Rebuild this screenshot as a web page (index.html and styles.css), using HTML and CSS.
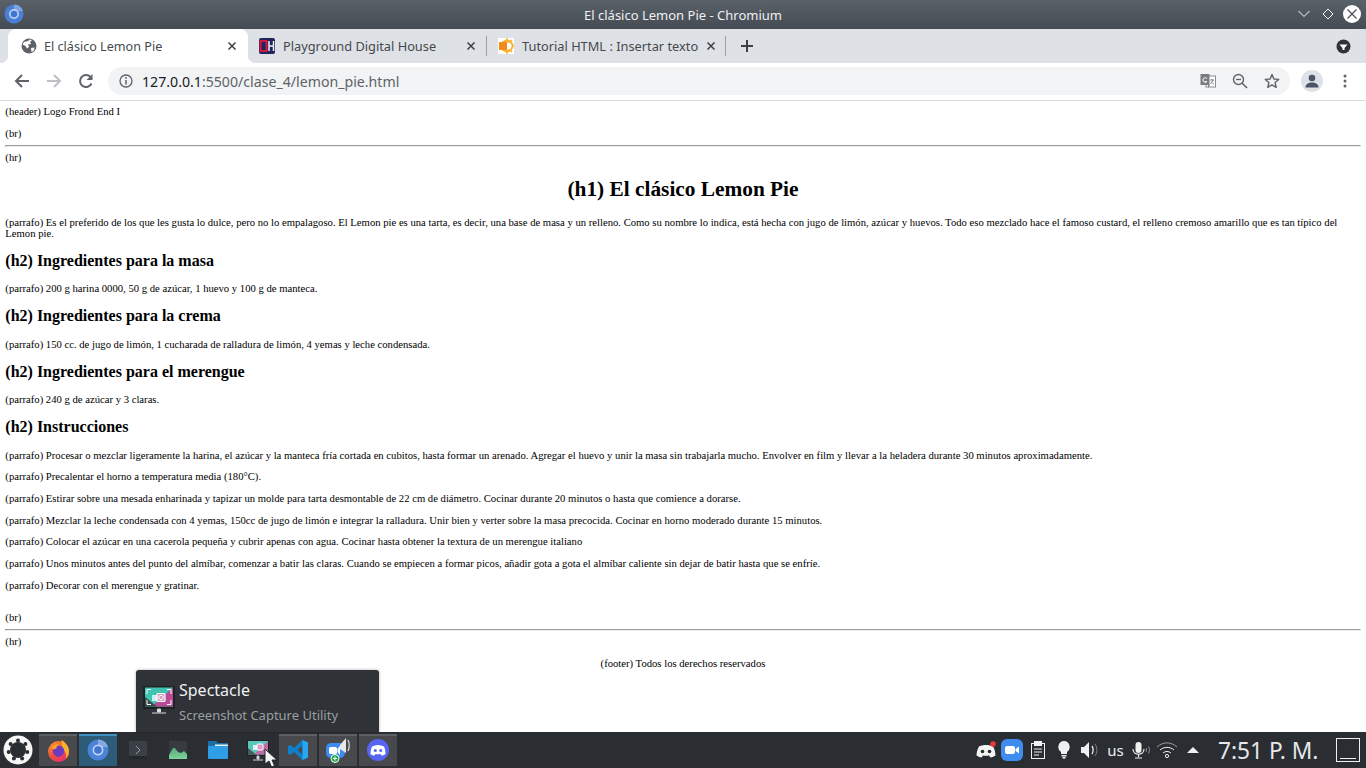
FILE: index.html
```html
<!DOCTYPE html>
<html lang="es">
<head>
<meta charset="utf-8">
<title>El clásico Lemon Pie - Chromium</title>
<link rel="stylesheet" href="styles.css">
</head>
<body>
<div class="titlebar">
  <svg class="app-icon" width="20" height="20" viewBox="0 0 20 20"><circle cx="10" cy="10" r="9.500" fill="#4a7fd6"/><path d="M10 .5A9.500 9.500 0 0 1 19 7H10Z" fill="#7ea4e4"/><circle cx="10" cy="10" r="5" fill="#b9d0f3"/><circle cx="10" cy="10" r="3.300" fill="#3f76cf"/></svg>
  <span class="title-text">El clásico Lemon Pie - Chromium</span>
  <div class="win-buttons">
    <svg class="win-chevron" width="14" height="10" viewBox="0 0 14 10"><path d="M1.500 2 7 7.500 12.500 2" fill="none" stroke="#fff" stroke-width="1"/></svg>
    <svg width="12" height="12" viewBox="0 0 12 12"><path d="M6 1 11 6 6 11 1 6Z" fill="none" stroke="#fff" stroke-width="1"/></svg>
    <svg width="18" height="18" viewBox="0 0 18 18"><circle cx="9" cy="9" r="9" fill="#fff"/><path d="M4.500 4.500 13.500 13.500M13.500 4.500 4.500 13.500" stroke="#4a4f56" stroke-width="1.200"/></svg>
  </div>
</div>

<div class="tabstrip">
  <div class="tab tab-active">
    <svg width="16" height="16" viewBox="0 0 16 16"><circle cx="8" cy="8" r="7.500" fill="#5f6368"/><path d="M3 4 7 3 9 1.500 11 2 9 4 10 6 7 6.500 8 9 6 10.500 4.500 8 1.500 6.500ZM10 10 13.500 9.500 13 12.500 10.500 14Z" fill="#fff"/></svg>
    <span class="tab-label">El clásico Lemon Pie</span>
    <svg class="tab-x" width="10" height="10" viewBox="0 0 10 10"><path d="M1.500 1.500 8.500 8.500M8.500 1.500 1.500 8.500" stroke="#3c4043" stroke-width="1.500"/></svg>
  </div>
  <div class="tab tab-second">
    <svg width="16" height="16" viewBox="0 0 16 16"><rect width="16" height="16" rx="2" fill="#23235e"/><rect x="1.500" y="3" width="6" height="10" fill="none" stroke="#e5173f" stroke-width="1.800"/><path d="M10 3v10M14.500 3v10M10 8h4.500" stroke="#f2f2f8" stroke-width="1.500" fill="none"/></svg>
    <span class="tab-label">Playground Digital House</span>
    <svg class="tab-x" width="10" height="10" viewBox="0 0 10 10"><path d="M1.500 1.500 8.500 8.500M8.500 1.500 1.500 8.500" stroke="#3c4043" stroke-width="1.500"/></svg>
  </div>
  <span class="tab-sep"></span>
  <div class="tab tab-third">
    <svg width="16" height="16" viewBox="0 0 16 16"><rect width="16" height="16" fill="#fff"/><circle cx="9" cy="8" r="6.500" fill="#f9b233"/><path d="M9 0v3M16 8h-3M14 2l-2 2M14 14l-2-2M9 16v-3" stroke="#f9b233" stroke-width="1.500"/><circle cx="10" cy="8" r="3.500" fill="#fff"/><rect x="1" y="4" width="8" height="8" rx="1" fill="#f08a1d"/></svg>
    <span class="tab-label">Tutorial HTML : Insertar texto</span>
    <svg class="tab-x" width="10" height="10" viewBox="0 0 10 10"><path d="M1.500 1.500 8.500 8.500M8.500 1.500 1.500 8.500" stroke="#3c4043" stroke-width="1.500"/></svg>
  </div>
  <span class="tab-sep"></span>
  <svg class="new-tab" width="14" height="14" viewBox="0 0 14 14"><path d="M7 1v12M1 7h12" stroke="#3c4043" stroke-width="2"/></svg>
  <svg class="tab-menu" width="15" height="15" viewBox="0 0 15 15"><circle cx="7.500" cy="7.500" r="7" fill="#303236"/><path d="M3.500 5.500h8L8.500 9v2h-2V9Z" fill="#fff"/></svg>
</div>

<div class="toolbar">
  <svg class="nav-icon" width="16" height="16" viewBox="0 0 16 16"><path d="M15 8H2M8 2 2 8l6 6" fill="none" stroke="#5f6368" stroke-width="2"/></svg>
  <svg class="nav-icon" width="16" height="16" viewBox="0 0 16 16"><path d="M1 8h13M8 2l6 6-6 6" fill="none" stroke="#bdc1c6" stroke-width="2"/></svg>
  <svg class="nav-icon" width="16" height="16" viewBox="0 0 16 16"><path d="M13.500 10.500A6 6 0 1 1 12.300 3.800" fill="none" stroke="#5f6368" stroke-width="2"/><path d="M14.500 1v6h-6Z" fill="#5f6368"/></svg>
  <div class="omnibox">
    <svg class="info" width="14" height="14" viewBox="0 0 14 14"><circle cx="7" cy="7" r="6" fill="none" stroke="#5f6368" stroke-width="1.300"/><path d="M7 6v4.500" stroke="#5f6368" stroke-width="1.500"/><circle cx="7" cy="4" r=".9" fill="#5f6368"/></svg>
    <span class="url"><span class="url-host">127.0.0.1</span>:5500/clase_4/lemon_pie.html</span>
    <div class="omni-actions">
      <svg width="16" height="16" viewBox="0 0 16 16"><rect x="6" y="3" width="9.500" height="11" fill="#fff" stroke="#8a8d91" stroke-width="1"/><rect x=".5" y="1" width="9" height="11" fill="#797c80"/><path d="M7 5.500A2.300 2.300 0 1 0 7 8.500H5" stroke="#fff" fill="none" stroke-width="1"/><path d="M8 15l2-3h-2Z" fill="#797c80"/><path d="M10 7h4M12 6v1M13 7c-.5 2-2 3-3 4M11 8.500c.5 1 2 2 3 2.500" stroke="#6b6e72" stroke-width=".8" fill="none"/></svg>
      <svg width="16" height="16" viewBox="0 0 16 16"><circle cx="6.500" cy="6.500" r="5" fill="none" stroke="#5f6368" stroke-width="1.400"/><path d="M10.200 10.200 15 15" stroke="#5f6368" stroke-width="1.600"/><path d="M4 6.500h5" stroke="#5f6368" stroke-width="1.300"/></svg>
      <svg width="16" height="16" viewBox="0 0 16 16"><path d="M8 1.500 9.900 6l4.800.4-3.600 3.200 1.100 4.700L8 11.800l-4.200 2.500 1.100-4.700L1.300 6.400 6.100 6Z" fill="none" stroke="#5f6368" stroke-width="1.400" stroke-linejoin="round"/></svg>
    </div>
  </div>
  <div class="avatar"><svg width="14" height="14" viewBox="0 0 14 14"><circle cx="7" cy="4" r="3.300" fill="#4a5568"/><path d="M.5 13.500c0-3.500 3-5 6.500-5s6.500 1.500 6.500 5Z" fill="#4a5568"/></svg></div>
  <svg class="kebab" width="4" height="14" viewBox="0 0 4 14"><circle cx="2" cy="2" r="1.500" fill="#5f6368"/><circle cx="2" cy="7" r="1.500" fill="#5f6368"/><circle cx="2" cy="12" r="1.500" fill="#5f6368"/></svg>
</div>

<main class="viewport">
  <div class="page">
    <div class="line-gap">(header) Logo Frond End I</div>
    <div>(br)</div>
    <hr>
    <div>(hr)</div>
    <h1>(h1) El clásico Lemon Pie</h1>
    <p>(parrafo) Es el preferido de los que les gusta lo dulce, pero no lo empalagoso. El Lemon pie es una tarta, es decir, una base de masa y un relleno. Como su nombre lo indica, está hecha con jugo de limón, azúcar y huevos. Todo eso mezclado hace el famoso custard, el relleno cremoso amarillo que es tan típico del Lemon pie.</p>
    <h2>(h2) Ingredientes para la masa</h2>
    <p>(parrafo) 200 g harina 0000, 50 g de azúcar, 1 huevo y 100 g de manteca.</p>
    <h2>(h2) Ingredientes para la crema</h2>
    <p>(parrafo) 150 cc. de jugo de limón, 1 cucharada de ralladura de limón, 4 yemas y leche condensada.</p>
    <h2>(h2) Ingredientes para el merengue</h2>
    <p>(parrafo) 240 g de azúcar y 3 claras.</p>
    <h2>(h2) Instrucciones</h2>
    <p>(parrafo) Procesar o mezclar ligeramente la harina, el azúcar y la manteca fría cortada en cubitos, hasta formar un arenado. Agregar el huevo y unir la masa sin trabajarla mucho. Envolver en film y llevar a la heladera durante 30 minutos aproximadamente.</p>
    <p>(parrafo) Precalentar el horno a temperatura media (180°C).</p>
    <p>(parrafo) Estirar sobre una mesada enharinada y tapizar un molde para tarta desmontable de 22 cm de diámetro. Cocinar durante 20 minutos o hasta que comience a dorarse.</p>
    <p>(parrafo) Mezclar la leche condensada con 4 yemas, 150cc de jugo de limón e integrar la ralladura. Unir bien y verter sobre la masa precocida. Cocinar en horno moderado durante 15 minutos.</p>
    <p>(parrafo) Colocar el azúcar en una cacerola pequeña y cubrir apenas con agua. Cocinar hasta obtener la textura de un merengue italiano</p>
    <p>(parrafo) Unos minutos antes del punto del almíbar, comenzar a batir las claras. Cuando se empiecen a formar picos, añadir gota a gota el almíbar caliente sin dejar de batir hasta que se enfríe.</p>
    <p class="last-para">(parrafo) Decorar con el merengue y gratinar.</p>
    <div>(br)</div>
    <hr class="footer-rule">
    <div class="line-gap">(hr)</div>
    <div class="footer-line">(footer) Todos los derechos reservados</div>
  </div>
</main>

<div class="tooltip">
  <svg width="32" height="30" viewBox="0 0 32 30"><rect x="0" y="0" width="32" height="23" rx="1" fill="#1f2224"/><rect x="2" y="1.500" width="28" height="19" fill="#3fc4b4"/><path d="M30 1.500v19H9Z" fill="#b84a96"/><path d="M2 20.500V11l12 9.500Z" fill="#3c4a4c"/><rect x="9" y="9" width="6" height="6" fill="#fff" opacity=".75"/><rect x="14" y="7.500" width="8" height="8" rx="1" fill="#d99ec4" stroke="#fff" stroke-width="1.200"/><circle cx="18" cy="11.500" r="2.200" fill="none" stroke="#fff"/><path d="M4 8V3.500h4M28 8V3.500h-4M4 14v4.500h4M28 14v4.500h-4" fill="none" stroke="#fff" stroke-width="1"/><path d="M14.500 23h3v3h-3ZM9 27h14" stroke="#d9dcde" stroke-width="1" fill="#d9dcde"/></svg>
  <div class="tooltip-text">
    <div class="tooltip-title">Spectacle</div>
    <div class="tooltip-sub">Screenshot Capture Utility</div>
  </div>
</div>

<footer class="taskbar">
  <svg class="start" width="30" height="30" viewBox="0 0 30 30"><circle cx="15" cy="15" r="14.500" fill="#f6f6f6"/><circle cx="15" cy="15" r="8" fill="#2a2e32"/><g fill="#2a2e32"><circle cx="15" cy="5.500" r="2"/><circle cx="22.400" cy="9" r="2"/><circle cx="24.300" cy="17" r="2"/><circle cx="19.100" cy="23.500" r="2"/><circle cx="10.900" cy="23.500" r="2"/><circle cx="5.700" cy="17" r="2"/><circle cx="7.600" cy="9" r="2"/></g></svg>
  <div class="task task-on">
    <svg width="23" height="23" viewBox="0 0 22 22"><defs><linearGradient id="ff" x1="0" y1="0" x2=".6" y2="1"><stop offset="0" stop-color="#ff9a2e"/><stop offset=".6" stop-color="#f2503a"/><stop offset="1" stop-color="#e8336e"/></linearGradient></defs><circle cx="11" cy="12" r="10" fill="url(#ff)"/><path d="M14 1c3 2 7 5 7 11 0 3-1 5-3 7 1-4 0-8-4-10Z" fill="#fbb02c"/><circle cx="11" cy="11.500" r="5.500" fill="#6d3bc0"/><path d="M4 8c2-3 7-4 9-2-3 0-4 1-4 3l-3 1Z" fill="#ff9f2e"/></svg>
  </div>
  <div class="task task-active">
    <svg width="22" height="22" viewBox="0 0 22 22"><circle cx="11" cy="11" r="10.500" fill="#4a83d8"/><path d="M11 .5A10.500 10.500 0 0 1 21 8H11Z" fill="#86a9e4"/><circle cx="11" cy="11" r="5.500" fill="#bcd2f2"/><circle cx="11" cy="11" r="3.800" fill="#3f76cf"/></svg>
  </div>
  <div class="task">
    <svg width="18" height="18" viewBox="0 0 18 18"><rect width="18" height="18" rx="1" fill="#3a4045"/><path d="M0 15h18v2a1 1 0 0 1-1 1H1a1 1 0 0 1-1-1Z" fill="#24282b"/><path d="M7 5l4 4-4 4" fill="none" stroke="#9aa1a6" stroke-width="1"/></svg>
  </div>
  <div class="task">
    <svg width="18" height="18" viewBox="0 0 18 18"><defs><linearGradient id="gr" x1="0" y1="0" x2="0" y2="1"><stop offset="0" stop-color="#5aa878"/><stop offset="1" stop-color="#7ed39c"/></linearGradient></defs><rect width="18" height="18" fill="#363b40"/><path d="M0 14 4 7l2 0 3 4 3 1 3-2 3 3v5H0Z" fill="url(#gr)"/></svg>
  </div>
  <div class="task">
    <svg width="20" height="18" viewBox="0 0 20 18"><path d="M0 1a1 1 0 0 1 1-1h7l2 2h9a1 1 0 0 1 1 1v4H0Z" fill="#1a6fa8"/><path d="M0 5h20v12a1 1 0 0 1-1 1H1a1 1 0 0 1-1-1Z" fill="#2e9fe6"/><path d="M7 3.500h13V5H7Z" fill="#e8f4fb"/></svg>
  </div>
  <div class="task">
    <svg width="22" height="21" viewBox="0 0 22 21"><rect width="22" height="16" rx="1" fill="#1f2224"/><rect x="1" y="1" width="20" height="13.500" fill="#58c8bc"/><path d="M21 1v13.500H7Z" fill="#c06aa8"/><path d="M1 14.500V8l8 6.500Z" fill="#4a5a5c"/><rect x="6" y="5" width="5" height="5" fill="#fff" opacity=".8"/><rect x="10" y="4" width="6" height="6" rx="1" fill="#d99ec4" stroke="#fff"/><path d="M10 16h2v3h-2ZM6 20h10" stroke="#cfd3d6" fill="#cfd3d6"/></svg>
  </div>
  <div class="task task-on">
    <svg width="22" height="22" viewBox="0 0 22 22"><path d="M15.500 1 21 3.500v15L15.500 21 7 13l-4 3-2-1.200v-7.600L3 6l4 3Zm0 5.500L10.500 11l5 4.500Z" fill="#0e7fcb"/><path d="M15.500 1 21 3.500v15L15.500 21Z" fill="#2aa5ef"/></svg>
  </div>
  <div class="task task-on">
    <svg width="26" height="26" viewBox="0 0 26 26"><rect x="1" y="6" width="19" height="15" rx="5" fill="#3f8cf0"/><rect x="4" y="10" width="8" height="7" rx="1.500" fill="#fff"/><path d="M12.500 12 15 9v9l-2.500-3Z" fill="#fff"/><path d="M15 8 21 1v15l-6-4Z" fill="#e8e8e8"/><path d="M23 3c1.500 3 1.500 8 0 11" stroke="#cfcfcf" fill="none" stroke-width="1.500"/><circle cx="10" cy="21.500" r="4" fill="#1fa84b" stroke="#fff" stroke-width="1"/><path d="M8 21.500h4M10 19.500v4" stroke="#fff" stroke-width="1"/></svg>
  </div>
  <div class="task task-on">
    <svg width="22" height="22" viewBox="0 0 22 22"><circle cx="11" cy="11" r="11" fill="#5865f2"/><path d="M5 7.500c2-1 4-1.500 6-1.500s4 .5 6 1.500c1 2 1.500 5 1.500 7.500-1.500 1-3 1.500-4 1.500l-1-1.500c-1.500.3-3.500.3-5 0l-1 1.500c-1 0-2.500-.5-4-1.500C3.500 12.500 4 9.500 5 7.500Z" fill="#fff"/><circle cx="8.300" cy="11.500" r="1.500" fill="#5865f2"/><circle cx="13.700" cy="11.500" r="1.500" fill="#5865f2"/></svg>
  </div>

  <div class="tray">
    <div class="slot slot-wide"><svg width="22" height="18" viewBox="0 0 22 18"><path d="M4 5.500c2-1 4.500-1.500 7-1.500s5 .5 7 1.500c1.500 2.500 2.500 6 2.500 9-2 1.200-3.500 2-5 2l-1.500-2c-2 .3-4 .3-6 0l-1.500 2c-1.500 0-3-.8-5-2C1.500 11.500 2.500 8 4 5.500Z" fill="#f4f4f4"/><circle cx="7.500" cy="10.500" r="1.800" fill="#2a2e32"/><circle cx="14.500" cy="10.500" r="1.800" fill="#2a2e32"/><circle cx="18" cy="3" r="2.800" fill="#e8383d"/></svg></div>
    <div class="slot"><svg width="22" height="22" viewBox="0 0 22 22"><rect width="22" height="22" rx="6" fill="#3f8cf0"/><rect x="4" y="7" width="10" height="8" rx="2" fill="#fff"/><path d="M14.500 10 18 7.500v7L14.500 12Z" fill="#fff"/></svg></div>
    <div class="slot"><svg width="14" height="18" viewBox="0 0 14 18"><rect x=".5" y="2.500" width="13" height="15" fill="none" stroke="#eff0f1"/><rect x="3" y="0" width="8" height="5" fill="#eff0f1"/><path d="M3 8h8M3 11h8M3 14h5" stroke="#eff0f1"/></svg></div>
    <div class="slot"><svg width="12" height="18" viewBox="0 0 12 18"><path d="M6 0a6 6 0 0 1 3 11v2H3v-2A6 6 0 0 1 6 0Z" fill="#eff0f1"/><rect x="3.500" y="14" width="5" height="1.500" fill="#eff0f1"/><rect x="4.500" y="16" width="3" height="1.500" fill="#eff0f1"/></svg></div>
    <div class="slot"><svg width="18" height="16" viewBox="0 0 18 16"><path d="M0 5h3l5-5v16l-5-5H0Z" fill="#eff0f1"/><path d="M11 4c1.500 2 1.500 6 0 8" stroke="#eff0f1" stroke-width="1.300" fill="none"/><path d="M14 2c2.500 3.500 2.500 8.500 0 12" stroke="#7f8386" stroke-width="1" fill="none"/></svg></div>
    <div class="slot slot-narrow"><span class="t-layout">us</span></div>
    <div class="slot"><svg width="19" height="17" viewBox="0 0 19 17"><rect x="3.500" y="0" width="6" height="11" rx="3" fill="#eff0f1"/><path d="M1 7c0 7 11 7 11 0M6.500 12v3M3 16h7" stroke="#eff0f1" fill="none" stroke-width="1.200"/><path d="M14 6c.7 1.200.7 3 0 4M16.500 4.500c1.300 2 1.300 5 0 7" stroke="#8a8e91" fill="none"/></svg></div>
    <div class="slot"><svg width="22" height="16" viewBox="0 0 22 16"><path d="M1 5c6-5.500 14-5.500 20 0" stroke="#9a9da0" fill="none"/><path d="M4 8c4-3.500 10-3.500 14 0" stroke="#eff0f1" fill="none"/><path d="M7 11c2.500-2 5.500-2 8 0" stroke="#eff0f1" fill="none"/><circle cx="11" cy="14" r="1.600" fill="none" stroke="#eff0f1"/></svg></div>
    <div class="slot"><svg width="12" height="6" viewBox="0 0 12 6"><path d="M0 6 6 0l6 6Z" fill="#eff0f1"/></svg></div>
    <span class="clock">7:51 P. M.</span>
    <div class="show-desktop"></div>
  </div>
</footer>

<svg class="cursor" width="14" height="20" viewBox="0 0 14 20"><path d="M1 1v15l4-3 2.500 6 3-1.300L8 12h5Z" fill="#f4f4f4" stroke="#232629" stroke-width="1"/></svg>
</body>
</html>
```
FILE: styles.css
```css
html, body {
  margin: 0;
  padding: 0;
  height: 100%;
}
body {
  width: 1366px;
  height: 768px;
  overflow: hidden;
  display: flex;
  flex-direction: column;
  background: #fff;
  font-family: "Noto Sans", sans-serif;
  position: relative;
}
svg { display: block; flex: none; }

.titlebar {
  height: 29px;
  flex: none;
  display: flex;
  align-items: center;
  justify-content: center;
  position: relative;
  background: linear-gradient(#596169, #454b53);
  color: #eff0f1;
  font-size: 13px;
}
.app-icon { position: absolute; left: 4px; top: 4px; }
.win-buttons {
  position: absolute;
  right: 5px;
  top: 5px;
  display: flex;
  align-items: center;
  gap: 9px;
}
.win-chevron { margin-right: 2px; }

.tabstrip {
  height: 34px;
  flex: none;
  display: flex;
  align-items: center;
  background: #dee1e6;
}
.tab {
  height: 34px;
  display: flex;
  align-items: center;
  box-sizing: border-box;
  font-size: 12.800px;
  color: #45494d;
  position: relative;
}
.tab-label { flex: 1; white-space: nowrap; }
.tab-active {
  width: 240px;
  margin-left: 8px;
  padding: 0 11px 0 13px;
  gap: 7px;
  background: #fff;
  border-radius: 8px 8px 0 0;
  font-size: 12.600px;
}
.tab-active::before, .tab-active::after {
  content: "";
  position: absolute;
  bottom: 0;
  width: 8px;
  height: 8px;
}
.tab-active::before {
  left: -8px;
  background: radial-gradient(circle at 0 0, #dee1e6 8px, #fff 8.5px);
}
.tab-active::after {
  right: -8px;
  background: radial-gradient(circle at 100% 0, #dee1e6 8px, #fff 8.5px);
}
.tab-second {
  width: 238px;
  padding: 0 10px 0 11px;
  gap: 8px;
}
.tab-third {
  width: 238px;
  padding: 0 13px 0 11px;
  gap: 8px;
}
.tab-sep {
  width: 1px;
  height: 20px;
  background: #9aa0a6;
  flex: none;
}
.new-tab { margin-left: 14px; }
.tab-menu { margin-left: auto; margin-right: 15px; }

.toolbar {
  height: 38px;
  flex: none;
  box-sizing: border-box;
  border-bottom: 1px solid #dadce0;
  display: flex;
  align-items: center;
  padding: 0 0 1px 14px;
  background: #fff;
}
.nav-icon { margin-right: 16px; }
.omnibox {
  width: 1182px;
  height: 28px;
  margin-left: -2px;
  border-radius: 14px;
  background: #f1f3f4;
  display: flex;
  align-items: center;
  padding: 0 10px 0 11px;
  box-sizing: border-box;
  flex: none;
}
.url {
  margin-left: 9px;
  font-size: 14.150px;
  color: #5f6368;
  white-space: nowrap;
}
.url-host { color: #202124; }
.omni-actions {
  margin-left: auto;
  display: flex;
  gap: 16px;
}
.avatar {
  width: 22px;
  height: 22px;
  margin-left: 11px;
  border-radius: 50%;
  background: #dee1e6;
  display: flex;
  align-items: center;
  justify-content: center;
}
.kebab { margin-left: 20px; }

.viewport {
  flex: 1;
  min-height: 0;
  overflow: hidden;
}
.page {
  zoom: 0.6667;
  padding: 8px;
  font-family: "Liberation Serif", serif;
  font-size: 16px;
  line-height: 16.500px;
  color: #000;
}
.page h1, .page h2 { line-height: normal; }
.page h1 { text-align: center; }
.line-gap { margin-bottom: 16.500px; }
.last-para { margin-bottom: 31.500px; }
.footer-rule { margin-top: 9.500px; }
.footer-line { text-align: center; }

.tooltip {
  position: absolute;
  left: 136px;
  top: 670px;
  width: 243px;
  height: 62px;
  box-sizing: border-box;
  padding: 0 0 0 7px;
  display: flex;
  align-items: center;
  gap: 4px;
  background: #2f3337;
  border-radius: 3px 3px 0 0;
  box-shadow: 0 0 3px rgba(0,0,0,.35);
}
.tooltip-title {
  font-size: 16px;
  line-height: 22px;
  color: #eff0f1;
  margin-bottom: 5px;
}
.tooltip-sub {
  font-size: 13px;
  line-height: 18px;
  color: #9b9ea1;
}

.taskbar {
  height: 36px;
  flex: none;
  display: flex;
  align-items: center;
  background: #2a2e32;
  padding-left: 3px;
  box-sizing: border-box;
  gap: 2px;
}
.start { margin-right: 4px; }
.task {
  width: 38px;
  height: 32px;
  box-sizing: border-box;
  flex: none;
  display: flex;
  align-items: center;
  justify-content: center;
}
.task-on {
  background: #47494c;
  box-shadow: inset 0 2px 0 #5d6064;
}
.task-active {
  background: #2e5b78;
  box-shadow: inset 0 2px 0 #3d8fc4;
}
.tray {
  margin-left: auto;
  display: flex;
  align-items: center;
  height: 36px;
  color: #eff0f1;
  width: 394px;
  flex: none;
}
.slot {
  width: 26px;
  height: 36px;
  flex: none;
  display: flex;
  align-items: center;
  justify-content: center;
}
.slot-wide { width: 27px; }
.slot-narrow { width: 25px; }
.t-layout { font-size: 15px; }
.clock {
  margin-left: 12px;
  width: 100px;
  font-size: 22.700px;
  color: #e6e8ea;
  white-space: nowrap;
}
.show-desktop {
  width: 22px;
  height: 22px;
  margin-left: 18px;
  border: 1px solid #eff0f1;
  position: relative;
}
.show-desktop::after {
  content: "";
  position: absolute;
  left: 3px;
  right: 3px;
  bottom: 2px;
  height: 1px;
  background: #eff0f1;
}
.cursor {
  position: absolute;
  left: 264px;
  top: 748px;
}
```
